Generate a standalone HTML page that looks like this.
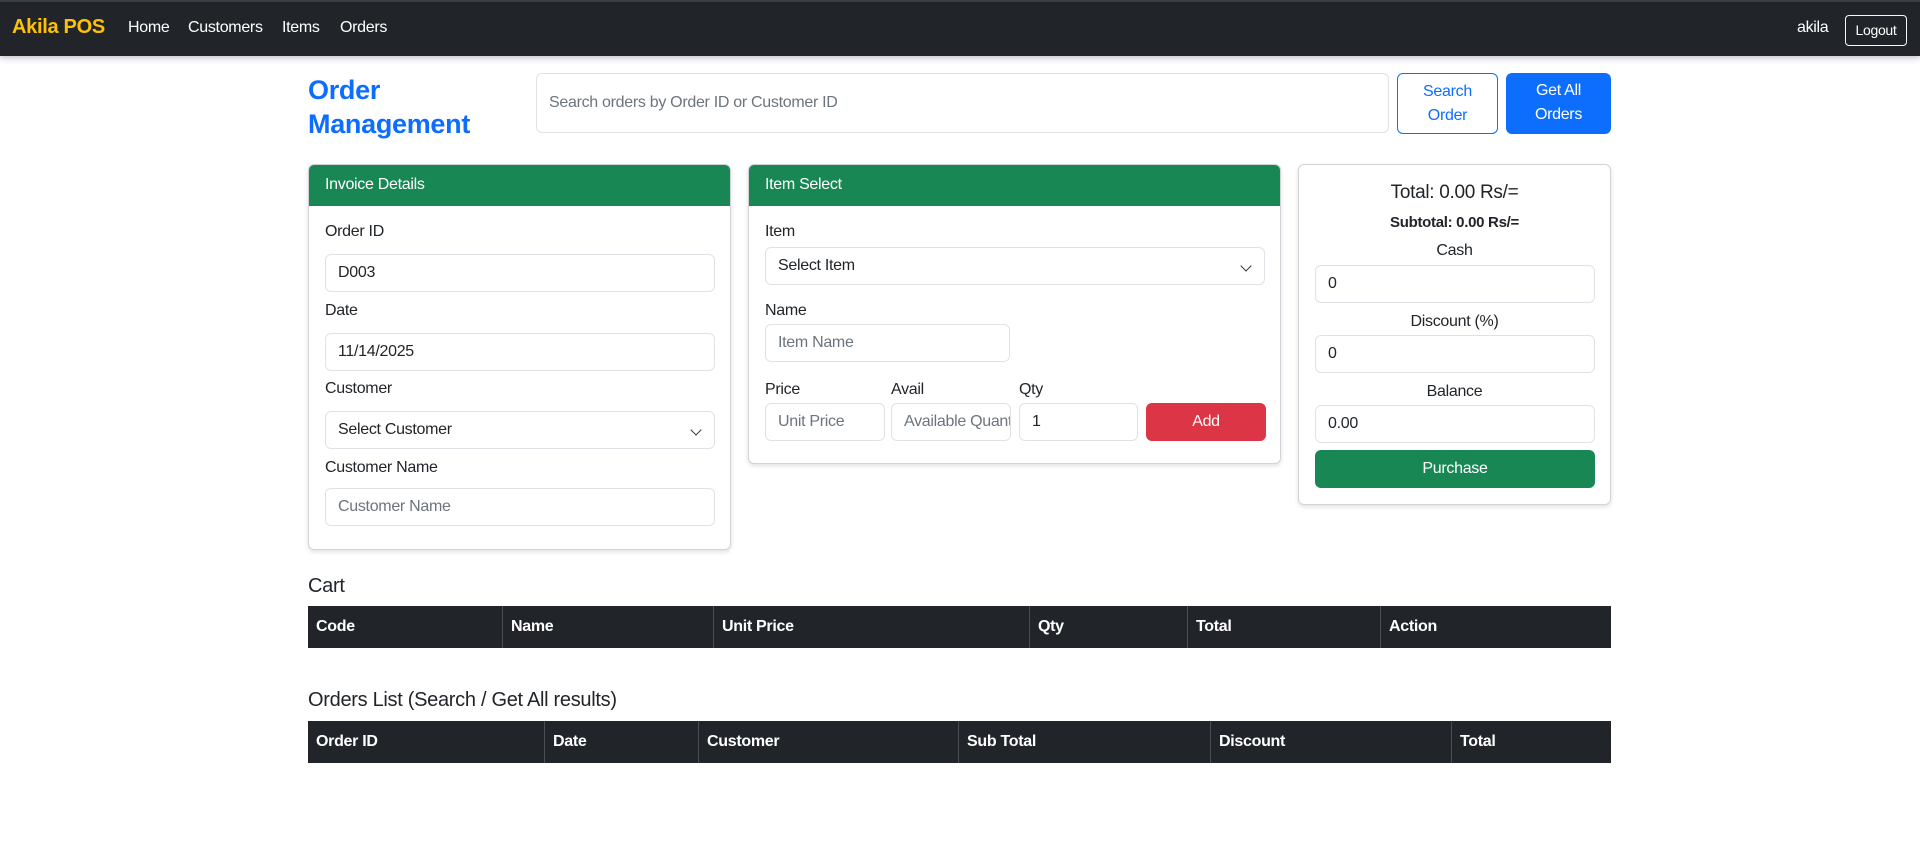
<!DOCTYPE html>
<html><head><meta charset="utf-8"><style>
*{box-sizing:border-box;margin:0;padding:0}
body{width:1920px;height:865px;background:#fff;font-family:"Liberation Sans",sans-serif;color:#212529;position:relative;overflow:hidden;font-size:16px;letter-spacing:-0.3px}
.a{position:absolute}
.nav{left:0;top:0;width:1920px;height:56px;background:#212529;border-top:2px solid #3a3d41;box-shadow:0 2px 6px rgba(0,0,0,.25)}
.nav span{position:absolute;top:17px;color:#fff;font-size:16px}
.inp{position:absolute;height:38px;border:1px solid #dee2e6;border-radius:6px;padding:0 12px;line-height:36px;font-size:16px;color:#212529;background:#fff;white-space:nowrap;overflow:hidden}
.ph{color:#6c757d}
.lbl{position:absolute;font-size:16px;line-height:24px}
.card{position:absolute;border:1px solid #d0d4d8;border-radius:6px;box-shadow:0 2px 5px rgba(0,0,0,.12);background:#fff;overflow:hidden}
.ch{height:41px;background:#198754;color:#fff;padding:0 16px;line-height:40px;font-size:16px}
.chev{position:absolute;right:14px;top:14px;width:8px;height:8px;border-right:1.5px solid #333;border-bottom:1.5px solid #333;transform:rotate(45deg)}
.th{position:absolute;background:#212529;color:#fff;font-weight:bold;font-size:16px;height:42px}
.th div{position:absolute;top:0;line-height:42px;padding-left:8px;height:42px;border-left:1px solid #4a4e52}
.th div:first-child{border-left:none}
.c{text-align:center;left:0;width:100%}
</style></head><body>
<div class="a nav">
<span style="left:12px;top:14px;color:#ffc107;font-weight:bold;font-size:20px">Akila POS</span>
<span style="left:128px">Home</span>
<span style="left:188px">Customers</span>
<span style="left:282px">Items</span>
<span style="left:340px">Orders</span>
<span style="left:1797px">akila</span>
<div class="a" style="left:1845px;top:13px;width:62px;height:31px;border:1px solid #f8f9fa;border-radius:4px;color:#fff;font-size:14px;text-align:center;line-height:29px">Logout</div>
</div>
<div class="a" style="left:308px;top:73px;color:#0d6efd;font-weight:bold;font-size:27px;line-height:34px">Order<br>Management</div>
<div class="inp ph" style="left:536px;top:73px;width:853px;height:60px;line-height:58px">Search orders by Order ID or Customer ID</div>
<div class="a" style="left:1397px;top:73px;width:101px;height:61px;border:1px solid #0d6efd;border-radius:6px;color:#0d6efd;text-align:center;padding-top:6px;line-height:24px">Search<br>Order</div>
<div class="a" style="left:1506px;top:73px;width:105px;height:61px;background:#0d6efd;border-radius:6px;color:#fff;text-align:center;padding-top:6px;line-height:24px">Get All<br>Orders</div>

<div class="card" style="left:308px;top:164px;width:423px;height:386px"><div class="ch">Invoice Details</div>
<div class="lbl" style="left:16px;top:55px">Order ID</div>
<div class="inp" style="left:16px;top:89px;width:390px">D003</div>
<div class="lbl" style="left:16px;top:134px">Date</div>
<div class="inp" style="left:16px;top:168px;width:390px">11/14/2025</div>
<div class="lbl" style="left:16px;top:212px">Customer</div>
<div class="inp" style="left:16px;top:246px;width:390px">Select Customer<span class="chev"></span></div>
<div class="lbl" style="left:16px;top:291px">Customer Name</div>
<div class="inp ph" style="left:16px;top:323px;width:390px">Customer Name</div>
</div>

<div class="card" style="left:748px;top:164px;width:533px;height:300px"><div class="ch">Item Select</div>
<div class="lbl" style="left:16px;top:55px">Item</div>
<div class="inp" style="left:16px;top:82px;width:500px">Select Item<span class="chev"></span></div>
<div class="lbl" style="left:16px;top:134px">Name</div>
<div class="inp ph" style="left:16px;top:159px;width:245px">Item Name</div>
<div class="lbl" style="left:16px;top:213px">Price</div>
<div class="lbl" style="left:142px;top:213px">Avail</div>
<div class="lbl" style="left:270px;top:213px">Qty</div>
<div class="inp ph" style="left:16px;top:238px;width:120px">Unit Price</div>
<div class="inp ph" style="left:142px;top:238px;width:120px">Available Quantity</div>
<div class="inp" style="left:270px;top:238px;width:119px">1</div>
<div class="a" style="left:397px;top:238px;width:120px;height:38px;background:#dc3545;border-radius:6px;color:#fff;text-align:center;line-height:38px">Add</div>
</div>

<div class="card" style="left:1298px;top:164px;width:313px;height:341px">
<div class="lbl c" style="top:16px;font-size:19px;line-height:24px">Total: 0.00 Rs/=</div>
<div class="lbl c" style="top:47px;font-size:15px;font-weight:bold;line-height:22px">Subtotal: 0.00 Rs/=</div>
<div class="lbl c" style="top:74px">Cash</div>
<div class="inp" style="left:16px;top:100px;width:280px">0</div>
<div class="lbl c" style="top:145px">Discount (%)</div>
<div class="inp" style="left:16px;top:170px;width:280px">0</div>
<div class="lbl c" style="top:215px">Balance</div>
<div class="inp" style="left:16px;top:240px;width:280px">0.00</div>
<div class="a" style="left:16px;top:285px;width:280px;height:38px;background:#198754;border-radius:6px;color:#fff;text-align:center;line-height:38px">Purchase</div>
</div>

<div class="a" style="left:308px;top:574px;font-size:20px;line-height:24px">Cart</div>
<div class="th" style="left:308px;top:606px;width:1303px">
<div style="left:0;width:194px">Code</div><div style="left:194px;width:211px">Name</div><div style="left:405px;width:316px">Unit Price</div><div style="left:721px;width:158px">Qty</div><div style="left:879px;width:193px">Total</div><div style="left:1072px;width:231px">Action</div>
</div>
<div class="a" style="left:308px;top:688px;font-size:20px;line-height:24px">Orders List (Search / Get All results)</div>
<div class="th" style="left:308px;top:721px;width:1303px">
<div style="left:0;width:236px">Order ID</div><div style="left:236px;width:154px">Date</div><div style="left:390px;width:260px">Customer</div><div style="left:650px;width:252px">Sub Total</div><div style="left:902px;width:241px">Discount</div><div style="left:1143px;width:160px">Total</div>
</div>
</body></html>
